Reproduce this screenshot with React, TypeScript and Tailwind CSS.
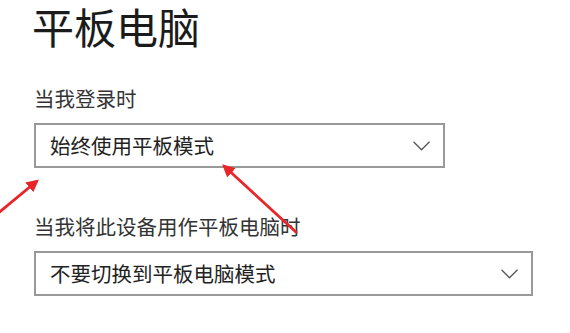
export default function App() {
  return (
    <div
      className="relative h-[333px] w-[570px] overflow-hidden bg-white pl-[34px] pt-[4px] text-[#1b1b1b]"
      style={{ fontFamily: '"Noto Sans CJK SC", "Noto Sans", sans-serif' }}
    >
      <h1 className="-ml-[2px] text-[42px] leading-[44px] font-normal">平板电脑</h1>

      <div className="mt-[36px] text-[20.5px] leading-[28px] text-[#333]">当我登录时</div>
      <Dropdown className="mt-[11px] w-[411px]" value="始终使用平板模式" />

      <div className="mt-[44px] text-[20.5px] leading-[28px] text-[#333]">当我将此设备用作平板电脑时</div>
      <Dropdown className="mt-[11px] w-[499px]" value="不要切换到平板电脑模式" />

      {/* red annotation arrows */}
      <svg className="pointer-events-none absolute inset-0" width="570" height="333" viewBox="0 0 570 333">
        <defs>
          <marker id="head" viewBox="0 0 10 10" refX="8" refY="5" markerWidth="4.5" markerHeight="4.5" orient="auto">
            <path d="M0 0 L10 5 L0 10 z" fill="#e8262a" />
          </marker>
        </defs>
        <line x1="-4" y1="215" x2="37" y2="181" stroke="#e8262a" strokeWidth="2.8" markerEnd="url(#head)" />
        <line x1="297" y1="233" x2="224" y2="166" stroke="#e8262a" strokeWidth="2.8" markerEnd="url(#head)" />
      </svg>
    </div>
  );
}

function Dropdown({ value, className }: { value: string; className: string }) {
  return (
    <div
      className={`flex h-[45px] items-center justify-between border-2 border-[#999] pl-[14px] pr-[13px] text-[20.5px] text-[#222] ${className}`}
    >
      <span>{value}</span>
      <svg width="17" height="10" viewBox="0 0 17 10" fill="none">
        <path d="M0.5 0.8 L8.5 8.8 L16.5 0.8" stroke="#555" strokeWidth="1.3" />
      </svg>
    </div>
  );
}
